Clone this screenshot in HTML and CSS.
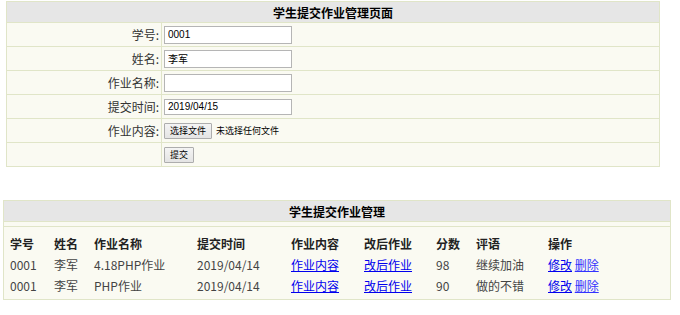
FILE: index.html
```html
<html>
<head>
  <meta charset="utf-8">
  <title>学生提交作业管理页面</title>
  <link rel="stylesheet" href="styles.css">
</head>
<body>

<!-- 提交表单 -->
<table class="form-table">
  <tr><th colspan="2">学生提交作业管理页面</th></tr>
  <tr>
    <td class="label">学号:</td>
    <td><input class="text" type="text" value="0001"></td>
  </tr>
  <tr>
    <td class="label">姓名:</td>
    <td><input class="text" type="text" value="李军"></td>
  </tr>
  <tr>
    <td class="label">作业名称:</td>
    <td><input class="text" type="text" value=""></td>
  </tr>
  <tr>
    <td class="label">提交时间:</td>
    <td><input class="text date" type="text" value="2019/04/15"></td>
  </tr>
  <tr>
    <td class="label">作业内容:</td>
    <td><span class="btn">选择文件</span><span class="file-note">未选择任何文件</span></td>
  </tr>
  <tr>
    <td class="label"></td>
    <td><button class="btn" type="button">提交</button></td>
  </tr>
</table>

<!-- 作业列表 -->
<table class="list-box">
  <tr><th>学生提交作业管理</th></tr>
  <tr><td class="spacer"></td></tr>
  <tr>
    <td class="list-cell">
      <table class="list">
        <tr class="head">
          <td class="c1">学号</td>
          <td class="c2">姓名</td>
          <td class="c3">作业名称</td>
          <td class="c4">提交时间</td>
          <td class="c5">作业内容</td>
          <td class="c6">改后作业</td>
          <td class="c7">分数</td>
          <td class="c8">评语</td>
          <td>操作</td>
        </tr>
        <tr>
          <td>0001</td>
          <td>李军</td>
          <td>4.18PHP作业</td>
          <td>2019/04/14</td>
          <td><a href="#">作业内容</a></td>
          <td><a href="#">改后作业</a></td>
          <td>98</td>
          <td>继续加油</td>
          <td><a href="#">修改</a> <a href="#" class="del">删除</a></td>
        </tr>
        <tr>
          <td>0001</td>
          <td>李军</td>
          <td>PHP作业</td>
          <td>2019/04/14</td>
          <td><a href="#">作业内容</a></td>
          <td><a href="#">改后作业</a></td>
          <td>90</td>
          <td>做的不错</td>
          <td><a href="#">修改</a> <a href="#" class="del">删除</a></td>
        </tr>
      </table>
    </td>
  </tr>
</table>

</body>
</html>
```

FILE: styles.css
```css
body {
  margin: 0;
  padding: 0;
  background-color: #fff;
  color: #333;
  font-family: "Noto Sans CJK SC", "Liberation Sans", sans-serif;
  font-size: 12px;
}

/* 表单 */
.form-table {
  border-collapse: collapse;
  width: 654px;
  margin: 1px 0 0 6px;
  background-color: #fafaf2;
}

.form-table th,
.form-table td {
  border: 1px solid #e0e5c8;
  padding: 0;
}

.form-table th {
  background-color: #e6e6e6;
  color: #000;
  height: 21px;
  font-size: 12px;
  font-weight: bold;
}

.form-table td {
  height: 24px;
}

.form-table td.label {
  width: 152px;
  text-align: right;
  padding-right: 2px;
  font-size: 12px;
}

.form-table td + td {
  padding-left: 2px;
}

.text {
  box-sizing: border-box;
  width: 128px;
  height: 18px;
  border: 1px solid #b5b5b5;
  background: #fff;
  padding: 0 3px;
  font-family: "Liberation Sans", "Noto Sans CJK SC", sans-serif;
  font-size: 10px;
  color: #000;
  vertical-align: middle;
}

.text.date {
  height: 16px;
}

.btn {
  display: inline-block;
  box-sizing: border-box;
  height: 16px;
  line-height: 14px;
  padding: 0 5px;
  border: 1px solid #adadad;
  border-radius: 1px;
  background: linear-gradient(#f4f4f4, #e4e4e4);
  font-family: "Noto Sans CJK SC", sans-serif;
  font-size: 9px;
  color: #000;
  vertical-align: middle;
}

.file-note {
  margin-left: 4px;
  font-size: 9px;
  color: #000;
  vertical-align: middle;
}

/* 列表 */
.list-box {
  border-collapse: collapse;
  width: 668px;
  margin: 33px 0 0 3px;
  background-color: #fafaf2;
}

.list-box th,
.list-box td {
  border: 1px solid #e0e5c8;
  padding: 0;
}

.list-box th {
  background-color: #e6e6e6;
  color: #000;
  height: 21px;
  font-size: 12px;
  font-weight: bold;
}

.list-box td.spacer {
  height: 5px;
}

.list-box td.list-cell {
  padding: 6px 0 3px 6px;
  vertical-align: top;
}

.list {
  border-collapse: collapse;
}

.list td {
  border: none;
  height: 21px;
  padding: 0;
  font-size: 12px;
  color: #444;
  white-space: nowrap;
}

.list tr.head td {
  font-weight: bold;
  color: #222;
}

.list .c1 { width: 44px; }
.list .c2 { width: 40px; }
.list .c3 { width: 103px; }
.list .c4 { width: 94px; }
.list .c5 { width: 73px; }
.list .c6 { width: 72px; }
.list .c7 { width: 40px; }
.list .c8 { width: 72px; }

a {
  color: #0000ee;
  text-decoration: underline;
}

a.del {
  color: #3333ff;
}
```
